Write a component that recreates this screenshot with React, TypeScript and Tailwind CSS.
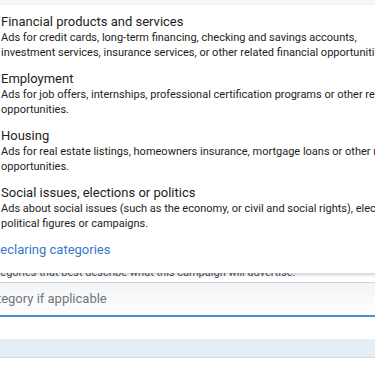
const items = [
  {
    title: "Financial products and services",
    lines: [
      "Ads for credit cards, long-term financing, checking and savings accounts,",
      "investment services, insurance services, or other related financial opportunities.",
    ],
  },
  {
    title: "Employment",
    lines: [
      "Ads for job offers, internships, professional certification programs or other related",
      "opportunities.",
    ],
  },
  {
    title: "Housing",
    lines: [
      "Ads for real estate listings, homeowners insurance, mortgage loans or other related",
      "opportunities.",
    ],
  },
  {
    title: "Social issues, elections or politics",
    lines: [
      "Ads about social issues (such as the economy, or civil and social rights), elections, or",
      "political figures or campaigns.",
    ],
  },
];

export default function App() {
  return (
    <div
      className="relative h-[366px] w-[375px] overflow-hidden bg-white"
      style={{ fontFamily: "Roboto, 'Noto Sans', sans-serif" }}
    >
      {/* page underneath the menu */}
      <div className="h-[5px] bg-[#f5f6f7]" />
      <div className="h-[260px]" />
      <p className="-ml-[15px] whitespace-nowrap text-[11px] leading-[15px] text-[#4b4f56]">
        categories that best describe what this campaign will advertise.
      </p>
      <div className="mt-[2px] h-[35px] border-t border-b-2 border-t-[#c9d6e6] border-b-[#4a90d9] bg-gradient-to-b from-[#f3f4f5] to-white">
        <div className="-ml-[17px] whitespace-nowrap pt-[8px] text-[13px] leading-[16px] text-[#6f767e]">
          category if applicable
        </div>
      </div>
      <div className="h-[22px]" />
      <div className="h-[19px] border-b border-[#d6dde5] bg-[#e5eef7]" />

      {/* dropdown menu */}
      <div className="absolute left-0 top-[5px] h-[268px] w-[420px] bg-white shadow-[0_2px_3px_rgba(0,0,0,0.18)]">
        <div className="flex flex-col gap-[11px] pl-[1px] pt-[9px]">
          {items.map((it) => (
            <div key={it.title}>
              <div className="whitespace-nowrap text-[13px] leading-[16px] text-[#1c1e21]">{it.title}</div>
              <div className="text-[11px] leading-[15px] text-[#1c1e21]">
                {it.lines.map((l) => (
                  <div key={l} className="whitespace-nowrap">
                    {l}
                  </div>
                ))}
              </div>
            </div>
          ))}
          <div className="-ml-[8px] whitespace-nowrap text-[13px] leading-[16px] text-[#3578c8]">
            declaring categories
          </div>
        </div>
      </div>
    </div>
  );
}
